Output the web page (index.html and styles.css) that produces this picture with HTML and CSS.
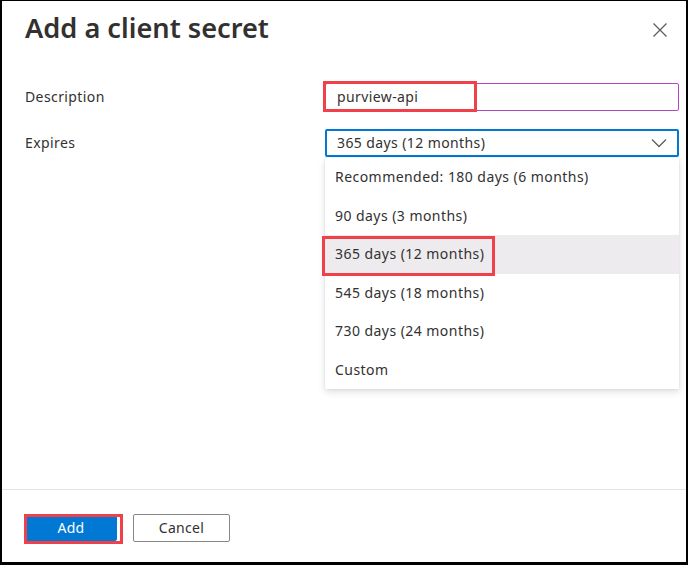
FILE: index.html
```html
<!DOCTYPE html>
<html lang="en">
<head>
<meta charset="utf-8">
<title>Add a client secret</title>
<link rel="stylesheet" href="styles.css">
</head>
<body>
<div class="panel">
  <header class="header">
    <h1 class="title">Add a client secret</h1>
    <button class="close" aria-label="Close">
      <svg width="16" height="16" viewBox="0 0 16 16"><path d="M1.5 1.5 L14.5 14.5 M14.5 1.5 L1.5 14.5" stroke="#605e5c" stroke-width="1.3" fill="none"/></svg>
    </button>
  </header>
  <div class="form">
    <div class="row row-desc">
      <label class="label">Description</label>
      <div class="field">
        <div class="input">purview-api</div>
        <span class="mark mark-input"></span>
      </div>
    </div>
    <div class="row row-exp">
      <label class="label">Expires</label>
      <div class="field">
        <div class="select">
          <span>365 days (12 months)</span>
          <svg class="chev" width="16" height="10" viewBox="0 0 16 10"><path d="M1 1.5 L8 8.5 L15 1.5" stroke="#605e5c" stroke-width="1.3" fill="none"/></svg>
        </div>
        <ul class="menu">
          <li class="opt">Recommended: 180 days (6 months)</li>
          <li class="opt">90 days (3 months)</li>
          <li class="opt opt-sel">365 days (12 months)<span class="mark mark-opt"></span></li>
          <li class="opt">545 days (18 months)</li>
          <li class="opt">730 days (24 months)</li>
          <li class="opt">Custom</li>
        </ul>
      </div>
    </div>
  </div>
  <footer class="footer">
    <button class="btn btn-primary">Add<span class="mark mark-btn"></span></button>
    <button class="btn btn-default">Cancel</button>
  </footer>
</div>
</body>
</html>
```
FILE: styles.css
```css
* { box-sizing: border-box; }
html, body { margin: 0; padding: 0; }
body {
  background: #000;
  width: 688px;
  height: 565px;
  padding: 1px 2px 3px 2px;
  font-family: "Noto Sans", "Open Sans", sans-serif;
  color: #323130;
}
.panel {
  background: #fff;
  height: 561px;
  display: flex;
  flex-direction: column;
}
.header {
  display: flex;
  align-items: flex-start;
  justify-content: space-between;
  padding: 8px 18px 0 23px;
  height: 72px;
}
.title {
  margin: 0;
  font-size: 27.2px;
  font-weight: 600;
  letter-spacing: 0;
  line-height: 38px;
  color: #323130;
}
.close {
  border: 0;
  background: none;
  padding: 0;
  margin-top: 13px;
  width: 16px;
  height: 16px;
  display: flex;
}
.form {
  padding: 0 7px 0 23px;
}
.row {
  display: grid;
  grid-template-columns: 300px 1fr;
  align-items: center;
}
.row-desc { height: 28px; margin-top: 10px; }
.row-exp { height: 28px; margin-top: 18px; }
.label {
  font-size: 14px;
  line-height: 20px;
  letter-spacing: 0.4px;
}
.field { position: relative; }
.input {
  height: 28px;
  border: 1px solid #b146c2;
  border-radius: 2px;
  padding: 0 11px;
  font-size: 14px;
  letter-spacing: 0.4px;
  line-height: 26px;
}
.select {
  height: 28px;
  border: 2px solid #0078d4;
  border-radius: 2px;
  padding: 0 10px;
  font-size: 14px;
  letter-spacing: 0.4px;
  line-height: 24px;
  display: flex;
  align-items: center;
  justify-content: space-between;
}
.menu {
  position: absolute;
  left: 0;
  right: 0;
  top: 29px;
  margin: 0;
  padding: 0;
  list-style: none;
  background: #fff;
  box-shadow: 0 3px 7px rgba(0,0,0,0.13), 0 0 2px rgba(0,0,0,0.1);
}
.opt {
  position: relative;
  height: 38.5px;
  line-height: 38.5px;
  padding: 0 10px;
  font-size: 14px;
  letter-spacing: 0.45px;
}
.opt-sel { background: #eeebee; }
.mark {
  position: absolute;
  border: 3px solid #f0414a;
  pointer-events: none;
}
.mark-input { left: -2px; top: -2px; width: 154px; height: 31px; }
.mark-opt { left: -3px; top: 1px; width: 173px; height: 40px; }
.mark-btn { left: -2px; top: -2px; width: 99px; height: 30px; }
.footer {
  margin-top: auto;
  border-top: 1px solid #e5e3e5;
  height: 73px;
  padding: 24px 0 0 23px;
  display: flex;
  align-items: flex-start;
  gap: 12px;
}
.btn {
  position: relative;
  height: 26px;
  font-family: inherit;
  font-size: 14px;
  letter-spacing: 0.3px;
  line-height: 24px;
  border-radius: 2px;
  padding: 0;
}
.btn-primary {
  width: 92px;
  margin-top: 1px;
  background: #0078d4;
  border: 1px solid #0078d4;
  color: #fff;
  margin-right: 4px;
}
.btn-default {
  width: 97px;
  height: 28px;
  background: #fff;
  border: 1px solid #8a8886;
  color: #323130;
  line-height: 26px;
}
```
